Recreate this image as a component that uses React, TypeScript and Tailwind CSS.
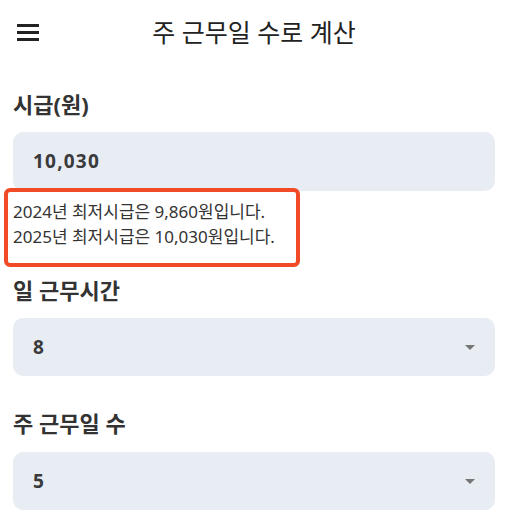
import React from "react";

const font = { fontFamily: '"Noto Sans", "Noto Sans CJK KR", sans-serif' };

function Arrow() {
  return (
    <svg width="10" height="5" viewBox="0 0 10 5" className="shrink-0">
      <path d="M0 0 L10 0 L5 5 Z" fill="#757575" />
    </svg>
  );
}

function SelectBox({ value }: { value: string }) {
  return (
    <div className="flex h-[58px] items-center justify-between rounded-[10px] bg-[#e8ecf3] pl-[20px] pr-[20px]">
      <span className="text-[19px] font-bold tracking-[1.2px] text-[#3a3a3c]">{value}</span>
      <Arrow />
    </div>
  );
}

export default function App() {
  return (
    <div className="min-h-[532px] w-[508px] bg-white" style={font}>
      <header className="grid h-16 grid-cols-[1fr_auto_1fr] items-center px-[17px]">
        <div className="flex flex-col gap-[4px]">
          <span className="block h-[3px] w-[22px] bg-[#222]" />
          <span className="block h-[3px] w-[22px] bg-[#222]" />
          <span className="block h-[3px] w-[22px] bg-[#222]" />
        </div>
        <h1 className="text-[25px] leading-8 font-normal text-[#222]">주 근무일 수로 계산</h1>
        <div />
      </header>

      <main className="flex flex-col px-[13px]">
        <label className="mt-[25px] text-[22px] leading-[30px] font-bold text-[#333]">시급(원)</label>
        <div className="mt-[13px] flex h-[59px] items-center rounded-[10px] bg-[#e8ecf3] pl-[20px]">
          <span className="text-[19px] font-bold tracking-[1.2px] text-[#3a3a3c]">10,030</span>
        </div>

        <div className="relative mt-[8px] text-[17px] leading-[25px] text-[#333]">
          <p>2024년 최저시급은 9,860원입니다.</p>
          <p>2025년 최저시급은 10,030원입니다.</p>
          <div className="pointer-events-none absolute left-[-9px] top-[-11px] h-[79px] w-[296px] rounded-[6px] border-4 border-[#f24a27]" />
        </div>

        <label className="mt-[26px] text-[22px] leading-[30px] font-bold text-[#333]">일 근무시간</label>
        <div className="mt-[13px]">
          <SelectBox value="8" />
        </div>

        <label className="mt-[32px] text-[22px] leading-[30px] font-bold text-[#333]">주 근무일 수</label>
        <div className="mt-[14px]">
          <SelectBox value="5" />
        </div>
      </main>
    </div>
  );
}
